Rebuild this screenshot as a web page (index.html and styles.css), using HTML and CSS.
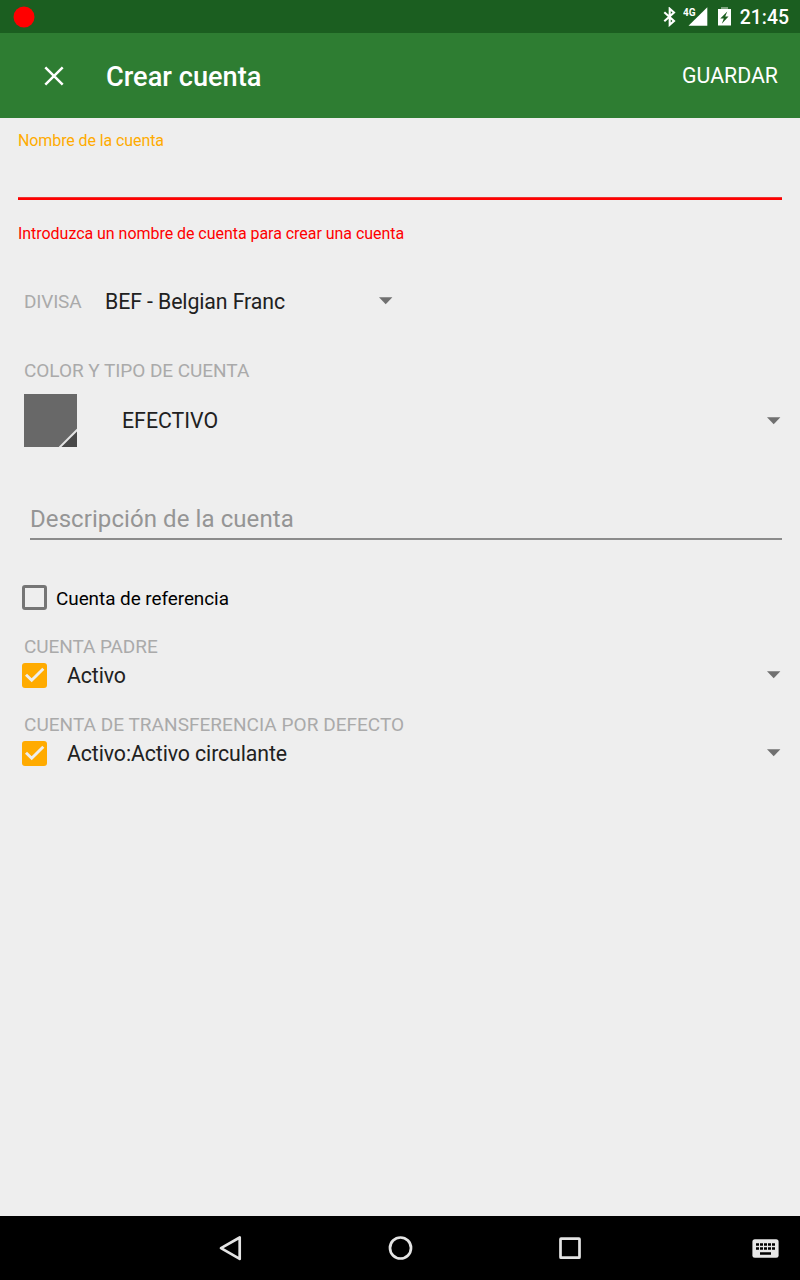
FILE: index.html
```html
<!DOCTYPE html>
<html lang="es">
<head>
<meta charset="utf-8">
<title>Crear cuenta</title>
<link rel="stylesheet" href="styles.css">
</head>
<body>
<div class="screen">
  <div class="status">
    <svg class="record" width="22" height="22" viewBox="0 0 22 22"><circle cx="11" cy="11" r="10.5" fill="#f00"/></svg>
    <div class="status-icons">
      <svg width="14" height="20" viewBox="0 0 14 20" fill="none" stroke="#fff" stroke-width="2.1"><path d="M1.300 5.200 11 14 6.700 17.800V1.700L11 5.500 1.300 14.300"/></svg>
      <svg class="signal" width="25" height="20" viewBox="0 0 25 20"><path d="M24.300.3v18.400H5.500z" fill="#fff"/><text class="network" x="0" y="8.500">4G</text></svg>
      <svg class="battery" width="13" height="20" viewBox="0 0 13 20"><path d="M3 0h7v3H3z" fill="#80a581"/><path d="M0 2h13v16.500H0z" fill="#fff"/><path d="M9.300 4.500 2.300 11.500h3.500l-2 5.300 6.700-7.300H7.200z" fill="#1b5e20"/></svg>
      <span class="clock">21:45</span>
    </div>
  </div>
  <header class="appbar">
    <svg class="close" width="20" height="20" viewBox="0 0 20 20"><path d="m1.300 1.300 17.400 17.400m0-17.400L1.300 18.700" stroke="#fff" stroke-width="2.500"/></svg>
    <h1 class="title">Crear cuenta</h1>
    <button class="save">GUARDAR</button>
  </header>
  <main class="form">
    <div class="name-field">
      <label class="floating">Nombre de la cuenta</label>
      <div class="name-line"></div>
      <p class="error">Introduzca un nombre de cuenta para crear una cuenta</p>
    </div>
    <div class="currency">
      <span class="label">DIVISA</span>
      <span class="value">BEF - Belgian Franc</span>
      <svg class="arrow" width="14" height="8" viewBox="0 0 14 8"><path d="M0 .3h13.400L6.700 7.300z"/></svg>
    </div>
    <div class="label type-label">COLOR Y TIPO DE CUENTA</div>
    <div class="type">
      <svg width="53" height="53" viewBox="0 0 53 53"><path d="M0 0h53v53H0z" fill="#686868"/><path d="M53 36v17H36z" fill="#484848"/><path d="M35.500 53.500 53.500 35.500" stroke="#e4e4e4" stroke-width="2"/></svg>
      <span class="value kind">EFECTIVO</span>
      <svg class="arrow" width="14" height="8" viewBox="0 0 14 8"><path d="M0 .3h13.400L6.700 7.300z"/></svg>
    </div>
    <div class="description">Descripción de la cuenta</div>
    <div class="placeholder-row">
      <span class="box"></span>
      <span class="box-label">Cuenta de referencia</span>
    </div>
    <div class="label parent-label">CUENTA PADRE</div>
    <div class="account">
      <span class="box checked"><svg width="25" height="25" viewBox="0 0 25 25"><path d="m4 11.800 5.700 5.500L21.300 5.700"/></svg></span>
      <span class="value">Activo</span>
      <svg class="arrow" width="14" height="8" viewBox="0 0 14 8"><path d="M0 .3h13.400L6.700 7.300z"/></svg>
    </div>
    <div class="label transfer-label">CUENTA DE TRANSFERENCIA POR DEFECTO</div>
    <div class="account">
      <span class="box checked"><svg width="25" height="25" viewBox="0 0 25 25"><path d="m4 11.800 5.700 5.500L21.300 5.700"/></svg></span>
      <span class="value">Activo:Activo circulante</span>
      <svg class="arrow" width="14" height="8" viewBox="0 0 14 8"><path d="M0 .3h13.400L6.700 7.300z"/></svg>
    </div>
  </main>
  <nav class="nav">
    <svg width="24" height="26" viewBox="0 0 24 26"><path d="M20.700 2.500v21.400L2 13.200z"/></svg>
    <svg class="home" width="26" height="26" viewBox="0 0 26 26"><circle cx="12.500" cy="13" r="10.500"/></svg>
    <svg class="recent" width="24" height="24" viewBox="0 0 24 24"><rect x="2.500" y="2.700" width="19" height="19" rx=".5"/></svg>
    <svg class="keyboard" width="27" height="19" viewBox="0 0 27 19"><rect x=".4" y=".2" width="26.200" height="18.500" rx="2.500"/><path d="M4 5.500h19M4 9.500h19" stroke-dasharray="3 1"/><path d="M8 14.500h11" stroke-width="2.500"/></svg>
  </nav>
</div>
</body>
</html>
```
FILE: styles.css
```css
* { box-sizing: border-box; }
body { margin: 0; font-family: Roboto, sans-serif; }
svg { display: block; flex: none; }
.screen { width: 800px; height: 1280px; display: flex; flex-direction: column; background: #eee; overflow: hidden; }

.status { height: 33px; flex: none; display: flex; align-items: center; justify-content: space-between; padding: 0 11px 0 13px; background: #1b5e20; }
.status-icons { display: flex; align-items: center; color: #fff; }
.signal { margin-left: 6px; }
.battery { margin-left: 10px; }
.network { font: 700 10px Roboto, sans-serif; fill: #fff; }
.clock { margin-left: 9px; font-size: 19.4px; font-weight: 500; line-height: 33px; padding-top: 2px; }

.appbar { height: 85px; flex: none; display: flex; align-items: center; padding: 0 22px 0 44px; background: #2e7d32; color: #fff; }
.title { margin: 3px 0 0 42px; font-size: 27.2px; font-weight: 500; line-height: 32px; }
.save { margin: 0 0 0 auto; padding: 0; border: 0; background: none; color: #fff; font: 400 21.3px/26px Roboto, sans-serif; }

.form { flex: 1; padding: 13px 18px 0; color: #212121; }
.floating { display: block; font-size: 16px; line-height: 20px; letter-spacing: -0.1px; color: #ffab00; }
.name-line { height: 3px; margin-top: 46px; background: #f00; border-top: 1px solid #e33; }
.error { margin: 24px 0 0; font-size: 16px; line-height: 20px; letter-spacing: -0.04px; color: #f00; }
.label { font-size: 19px; line-height: 22px; color: #aaa; }
.value { font-size: 21.3px; line-height: 26px; letter-spacing: -0.1px; white-space: nowrap; }
.kind { letter-spacing: 0; }
.arrow { margin-left: auto; fill: #707070; }
.currency { display: flex; align-items: center; width: 369px; height: 26px; margin: 45px 0 0 6px; }
.currency .label { width: 81px; letter-spacing: -0.2px; }
.currency .arrow { margin-bottom: 2px; }
.type-label { margin: 45px 0 0 6px; letter-spacing: -0.05px; }
.type { display: flex; align-items: center; height: 53px; margin: 12px 1px 0 6px; }
.type .value { margin-left: 45px; }
.type .arrow { margin-top: 1px; }
.description { height: 41px; margin: 52px 0 0 12px; border-bottom: 2px solid #8b8b8b; font-size: 24px; line-height: 40px; letter-spacing: 0.08px; color: #959595; }
.placeholder-row { display: flex; align-items: center; height: 25px; margin: 45px 0 0 4px; }
.box { flex: none; width: 25px; height: 25px; border: 3px solid #757575; border-radius: 3px; }
.box-label { margin-left: 9px; padding-top: 2px; font-size: 18.9px; line-height: 24px; letter-spacing: -0.04px; color: #000; }
.parent-label { margin: 26px 0 0 6px; letter-spacing: -0.08px; }
.transfer-label { margin: 26px 0 0 6px; letter-spacing: 0.04px; }
.account { display: flex; align-items: center; height: 25px; margin: 5px 1px 0 4px; }
.account .value { margin-left: 20px; }
.account .arrow { margin-bottom: 2px; }
.checked { border: 0; background: #ffab00; }
.checked path { fill: none; stroke: #eee; stroke-width: 2.9; }

.nav { height: 64px; flex: none; display: flex; align-items: center; padding: 0 21px 0 219px; background: #000; fill: none; stroke: #e4e4e4; stroke-width: 2.7; stroke-linejoin: round; }
.home { margin-left: 145px; }
.recent { margin-left: 144px; }
.keyboard { margin-left: auto; stroke: #000; }
.keyboard rect { fill: #e8e8e8; stroke: none; }
```
